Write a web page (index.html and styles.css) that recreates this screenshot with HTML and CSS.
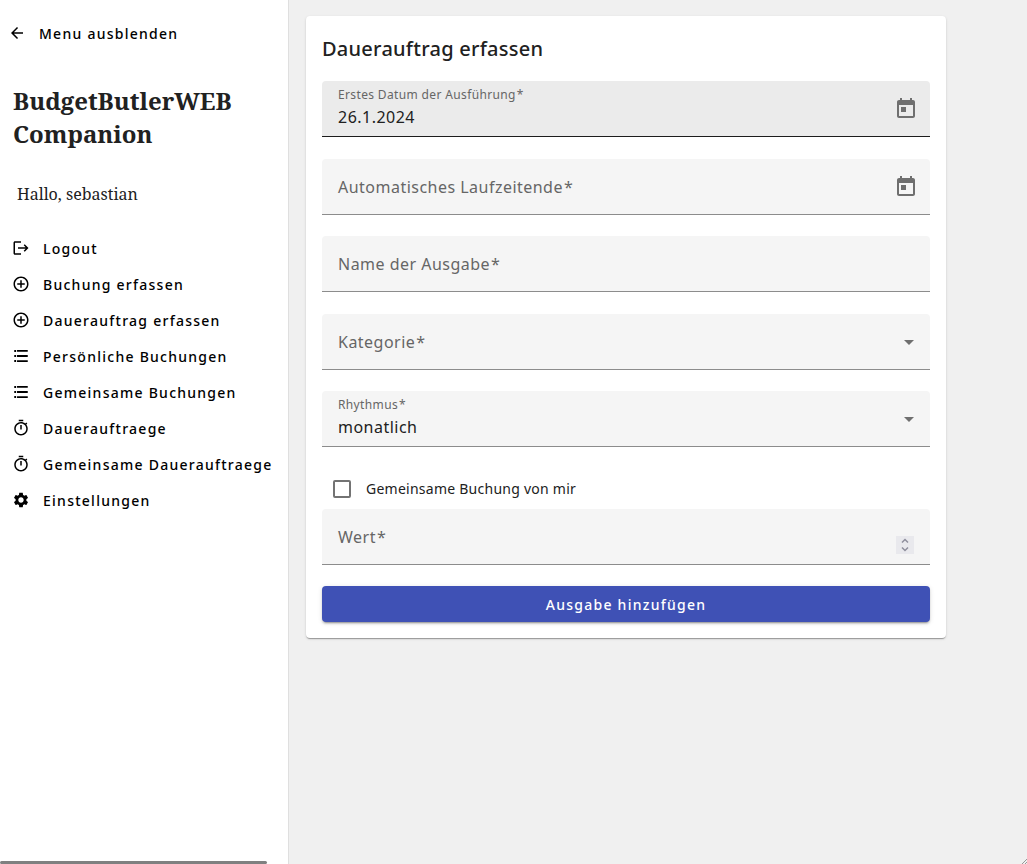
FILE: index.html
```html
<!DOCTYPE html>
<html lang="de">
<head>
<meta charset="utf-8">
<title>BudgetButlerWEB Companion</title>
<link rel="stylesheet" href="styles.css">
</head>
<body>
<svg class="sprite" aria-hidden="true">
  <symbol id="plus" viewBox="0 0 24 24"><path d="M13 7h-2v4H7v2h4v4h2v-4h4v-2h-4V7zm-1-5C6.480 2 2 6.480 2 12s4.480 10 10 10 10-4.480 10-10S17.520 2 12 2zm0 18c-4.410 0-8-3.590-8-8s3.590-8 8-8 8 3.590 8 8-3.590 8-8 8z"/></symbol>
  <symbol id="list" viewBox="0 0 24 24"><path d="M3 4h2.500v2.500H3zM3 10.700h2.500v2.600H3zM3 17.300h2.500v2.700H3zM6.700 4H21v2.300H6.700zM6.700 10.800H21v2.400H6.700zM6.700 17.500H21v2.500H6.700z"/></symbol>
  <symbol id="timer" viewBox="0 0 24 24"><path d="M15 1H9v2h6V1zm-4 13h2V8h-2v6zm8.030-6.610l1.420-1.420c-.43-.51-.9-.99-1.410-1.410l-1.420 1.420C16.070 4.740 14.120 4 12 4c-4.970 0-9 4.030-9 9s4.020 9 9 9 9-4.030 9-9c0-2.120-.74-4.070-1.970-5.610zM12 20c-3.870 0-7-3.130-7-7s3.130-7 7-7 7 3.130 7 7-3.130 7-7 7z"/></symbol>
  <symbol id="calendar" viewBox="0 0 24 24"><path d="M19 3h-1V1h-2v2H8V1H6v2H5c-1.110 0-1.990.9-1.990 2L3 19c0 1.100.89 2 2 2h14c1.100 0 2-.9 2-2V5c0-1.100-.9-2-2-2zm0 16H5V8h14v11zM7 10h5v5H7z"/></symbol>
</svg>
<div class="app">
  <aside class="sidebar">
    <button type="button" class="nav-button collapse"><svg class="icon" viewBox="0 0 24 24"><path d="M20 11H7.830l5.590-5.590L12 4l-8 8 8 8 1.410-1.410L7.830 13H20v-2z"/></svg>Menu ausblenden</button>
    <h1 class="brand">BudgetButlerWEB Companion</h1>
    <p class="greeting">Hallo, sebastian</p>
    <nav class="nav">
      <a href="#" class="nav-button"><svg class="icon" viewBox="0 0 24 24"><path d="M17 7l-1.410 1.410L18.170 11H8v2h10.170l-2.580 2.580L17 17l5-5zM4 5h8V3H4c-1.100 0-2 .9-2 2v14c0 1.100.9 2 2 2h8v-2H4V5z"/></svg>Logout</a>
      <a href="#" class="nav-button"><svg class="icon"><use href="#plus"/></svg>Buchung erfassen</a>
      <a href="#" class="nav-button"><svg class="icon"><use href="#plus"/></svg>Dauerauftrag erfassen</a>
      <a href="#" class="nav-button"><svg class="icon"><use href="#list"/></svg>Persönliche Buchungen</a>
      <a href="#" class="nav-button"><svg class="icon"><use href="#list"/></svg>Gemeinsame Buchungen</a>
      <a href="#" class="nav-button"><svg class="icon"><use href="#timer"/></svg>Dauerauftraege</a>
      <a href="#" class="nav-button"><svg class="icon"><use href="#timer"/></svg>Gemeinsame Dauerauftraege</a>
      <a href="#" class="nav-button"><svg class="icon" viewBox="0 0 24 24"><path d="M19.140 12.940c.04-.3.060-.61.060-.94 0-.32-.02-.64-.07-.94l2.030-1.580c.18-.14.23-.41.12-.61l-1.920-3.320c-.12-.22-.37-.29-.59-.22l-2.390.96c-.5-.38-1.030-.7-1.620-.94l-.36-2.540c-.04-.24-.24-.41-.48-.41h-3.840c-.24 0-.43.17-.47.41l-.36 2.540c-.59.24-1.130.57-1.620.94l-2.390-.96c-.22-.08-.47 0-.59.22L2.740 8.870c-.12.21-.08.47.12.61l2.030 1.580c-.05.3-.09.63-.09.94s.02.64.07.94l-2.030 1.580c-.18.14-.23.41-.12.61l1.920 3.320c.12.22.37.29.59.22l2.390-.96c.5.38 1.030.7 1.620.94l.36 2.540c.05.24.24.41.48.41h3.840c.24 0 .44-.17.47-.41l.36-2.540c.59-.24 1.130-.56 1.620-.94l2.390.96c.22.08.47 0 .59-.22l1.920-3.320c.12-.22.07-.47-.12-.61l-2.010-1.580zM12 15.600c-1.980 0-3.600-1.620-3.600-3.600s1.620-3.600 3.600-3.600 3.600 1.620 3.600 3.600-1.620 3.600-3.600 3.600z"/></svg>Einstellungen</a>
    </nav>
    <div class="scroll-thumb" aria-hidden="true"></div>
  </aside>
  <main class="content">
    <form class="card">
      <h2 class="card-title">Dauerauftrag erfassen</h2>
      <div class="group">
        <div class="field filled active">
          <label for="start">Erstes Datum der Ausführung<span class="required">*</span></label>
          <input id="start" type="text" value="26.1.2024">
          <button type="button" class="picker" aria-label="Kalender öffnen"><svg><use href="#calendar"/></svg></button>
        </div>
        <div class="field">
          <label for="end">Automatisches Laufzeitende<span class="required">*</span></label>
          <input id="end" type="text">
          <button type="button" class="picker" aria-label="Kalender öffnen"><svg><use href="#calendar"/></svg></button>
        </div>
      </div>
      <div class="group">
        <div class="field">
          <label for="name">Name der Ausgabe<span class="required">*</span></label>
          <input id="name" type="text">
        </div>
        <div class="field">
          <label for="category">Kategorie<span class="required">*</span></label>
          <select id="category"><option></option></select>
          <svg class="arrow" viewBox="0 0 10 5"><path d="M0 0h10L5 5z"/></svg>
        </div>
      </div>
      <div class="group">
        <div class="field filled">
          <label for="rhythm">Rhythmus<span class="required">*</span></label>
          <select id="rhythm"><option>monatlich</option></select>
          <svg class="arrow" viewBox="0 0 10 5"><path d="M0 0h10L5 5z"/></svg>
        </div>
      </div>
      <label class="check"><input type="checkbox">Gemeinsame Buchung von mir</label>
      <div class="group">
        <div class="field">
          <label for="amount">Wert<span class="required">*</span></label>
          <input id="amount" type="number">
          <svg class="spinner" viewBox="0 0 18 18"><path d="M6 6.500l3-3 3 3M6 11.500l3 3 3-3"/></svg>
        </div>
      </div>
      <button type="submit" class="submit">Ausgabe hinzufügen</button>
    </form>
  </main>
</div>
<svg class="grip" viewBox="0 0 5 5" aria-hidden="true"><path d="M0 5l5-5M3 5l2-2"/></svg>
</body>
</html>
```

FILE: styles.css
```css
* { box-sizing: border-box; }
body {
  margin: 0;
  background: #f0f0f0;
  color: #212121;
  font-family: "Noto Sans", sans-serif;
}
.sprite { display: none; }
.app { display: flex; min-height: 100vh; }

.sidebar {
  position: relative;
  flex: none;
  width: 289px;
  padding-top: 15px;
  background: #fff;
  border-right: 1px solid #dfdfdf;
}
.nav-button {
  display: flex;
  align-items: center;
  gap: 13px;
  height: 36px;
  padding: 0 12px;
  border: 0;
  background: none;
  color: #000;
  font: 500 14px "Noto Sans", sans-serif;
  letter-spacing: 0.09em;
  text-decoration: none;
  white-space: nowrap;
}
.collapse { padding-left: 8px; }
.icon { flex: none; width: 18px; height: 18px; fill: currentColor; }
.brand {
  margin: 33px 13px 0;
  font: 700 24px/33px "Noto Serif", "DejaVu Serif", serif;
}
.greeting {
  margin: 33px 17px 0;
  font: 16px/22px "Noto Serif", "DejaVu Serif", serif;
}
.nav { margin-top: 25px; }
.scroll-thumb {
  position: absolute;
  left: 0;
  bottom: 0;
  width: 267px;
  height: 3px;
  border-radius: 2px;
  background: #7f8080;
}

.content { flex: 1; padding: 16px 17px; }
.card {
  display: flex;
  flex-direction: column;
  max-width: 640px;
  padding: 17px 16px 16px;
  border-radius: 4px;
  background: #fff;
  box-shadow: 0 2px 1px -1px rgba(0,0,0,.2), 0 1px 1px rgba(0,0,0,.14), 0 1px 3px rgba(0,0,0,.12);
}
.card-title {
  margin: 0 0 16px;
  font-size: 20px;
  line-height: 32px;
  font-weight: 500;
  letter-spacing: 0.0125em;
}
.group {
  display: flex;
  flex-direction: column;
  gap: 22px;
  margin-bottom: 21px;
}
.field {
  position: relative;
  display: flex;
  align-items: center;
  height: 56px;
  padding: 0 16px;
  border-bottom: 1px solid #8c8c8c;
  border-radius: 4px 4px 0 0;
  background: #f5f5f5;
}
.active { background: #ebebeb; border-color: #1c1c1c; }
.field label {
  position: absolute;
  left: 16px;
  top: 16px;
  color: #666;
  font-size: 16px;
  line-height: 24px;
  letter-spacing: 0.03em;
  pointer-events: none;
}
.field.filled label { top: 6px; font-size: 12px; line-height: 16px; }
.required { margin-left: 1px; }
.field input, .field select {
  flex: 1;
  min-width: 0;
  height: 24px;
  margin-top: 16px;
  padding: 0;
  border: 0;
  outline: 0;
  appearance: none;
  background: none;
  color: #212121;
  font: 16px/24px "Noto Sans", sans-serif;
  letter-spacing: 0.03em;
}
.field input::-webkit-inner-spin-button { display: none; }
.picker {
  flex: none;
  width: 48px;
  height: 48px;
  margin-right: -16px;
  padding: 12px;
  border: 0;
  background: none;
  color: #6f6f6f;
}
.picker svg { display: block; width: 24px; height: 24px; fill: currentColor; }
.arrow { flex: none; width: 10px; height: 5px; margin-top: 2px; fill: #6f6f6f; }
.spinner {
  flex: none;
  width: 18px;
  height: 18px;
  margin-top: 16px;
  background: #e9e9ed;
  fill: none;
  stroke: #8f8f9d;
  stroke-width: 1.5;
}
.check {
  display: flex;
  align-items: center;
  gap: 15px;
  height: 40px;
  margin-top: 1px;
  padding-left: 11px;
  font-size: 14px;
  line-height: 20px;
  letter-spacing: 0.0178em;
}
.check input {
  width: 18px;
  height: 18px;
  margin: 0;
  appearance: none;
  border: 2px solid #737373;
  border-radius: 2px;
}
.check input:checked { background: #3f51b5; }
.submit {
  height: 36px;
  border: 0;
  border-radius: 4px;
  background: #3f51b5;
  color: #fff;
  font: 500 14px "Noto Sans", sans-serif;
  letter-spacing: 0.09em;
  box-shadow: 0 3px 1px -2px rgba(0,0,0,.2), 0 2px 2px rgba(0,0,0,.14), 0 1px 5px rgba(0,0,0,.12);
}
.grip {
  position: fixed;
  right: 0;
  bottom: 0;
  width: 5px;
  height: 5px;
  fill: none;
  stroke: #999;
}
```
